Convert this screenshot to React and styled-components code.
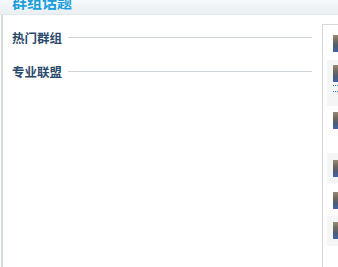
import React from "react";
import styled, { createGlobalStyle } from "styled-components";

const Global = createGlobalStyle`
  html, body { margin: 0; padding: 0; background: #fff; overflow: hidden; }
  body { font-family: "Noto Sans CJK SC", "Liberation Sans", sans-serif; }
`;

const Page = styled.div`
  width: 338px;
  height: 267px;
  overflow: hidden;
  display: flex;
  flex-direction: column;
`;

const Header = styled.div`
  height: 15px;
  flex: none;
  overflow: hidden;
  background: linear-gradient(#f6f8fa, #eaeff3);
  border-bottom: 1px solid #e2e8ec;
  box-sizing: border-box;
  padding-left: 12px;
`;

const Title = styled.h2`
  margin: -8px 0 0 0;
  font-size: 15px;
  line-height: 20px;
  font-weight: bold;
  color: #1a9fdc;
`;

const Body = styled.div`
  flex: 1;
  display: flex;
  padding-left: 1px;
  min-width: 0;
`;

const Main = styled.div`
  flex: none;
  width: 300px;
  border-left: 2px solid #d3dbdb;
  padding: 12px 0 0 9px;
  display: flex;
  flex-direction: column;
  gap: 14px;
`;

const Section = styled.div`
  display: flex;
  align-items: center;
  height: 20px;
  gap: 6px;
`;

const SectionTitle = styled.span`
  font-size: 12.5px;
  font-weight: bold;
  color: #2b4b6d;
  white-space: nowrap;
`;

const Rule = styled.div`
  flex: 1;
  height: 1px;
  background: #cdd5d9;
`;

const Side = styled.div`
  margin: 9px 0 0 10px;
  flex: none;
  width: 40px;
  border-left: 1px solid #d6d9db;
  border-top: 1px solid #d6d9db;
  padding-left: 4px;
  display: flex;
  flex-direction: column;
`;

const Item = styled.div`
  height: ${(p) => p.$h}px;
  padding: ${(p) => p.$top}px 0 0 6px;
  box-sizing: border-box;
  background: ${(p) => (p.$alt ? "#f4f5f5" : "transparent")};
  display: flex;
  flex-direction: column;
  gap: 3px;
`;

const Thumb = styled.div`
  width: 16px;
  height: 17px;
  background: linear-gradient(#9a8a74 0%, #6f6a60 35%, #4e5c70 65%, #3f63a8 100%);
`;

const Dots = styled.div`
  width: 5px;
  height: 5px;
  border-top: 1px dotted #2f6fc0;
  border-bottom: 1px dotted #2f6fc0;
`;

const items = [
  { h: 35, top: 10, alt: false },
  { h: 46, top: 5, alt: true, text: true },
  { h: 47, top: 6, alt: false },
  { h: 30, top: 7, alt: true },
  { h: 33, top: 9, alt: false },
  { h: 30, top: 6, alt: true },
];

export default function App() {
  return (
    <Page>
      <Global />
      <Header>
        <Title>群组话题</Title>
      </Header>
      <Body>
        <Main>
          <Section>
            <SectionTitle>热门群组</SectionTitle>
            <Rule />
          </Section>
          <Section>
            <SectionTitle>专业联盟</SectionTitle>
            <Rule />
          </Section>
        </Main>
        <Side>
          {items.map((it, i) => (
            <Item key={i} $h={it.h} $top={it.top} $alt={it.alt}>
              <Thumb />
              {it.text && <Dots />}
            </Item>
          ))}
        </Side>
      </Body>
    </Page>
  );
}
